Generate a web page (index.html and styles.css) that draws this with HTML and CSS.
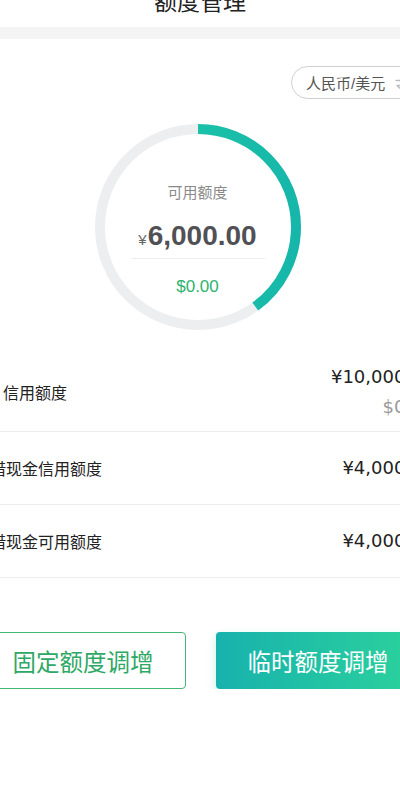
FILE: index.html
```html
<!DOCTYPE html>
<html lang="zh-CN">
<head>
    <meta charset="UTF-8">
    <meta name="viewport" content="width=device-width, initial-scale=1.0">
    <title>额度管理</title>
    <link rel="stylesheet" href="styles.css">
</head>
<body>
    <div class="page">
        <div class="header">
            <h1>额度管理</h1>
        </div>
        <div class="band"></div>

        <div class="summary">
            <div class="switch-row">
                <div class="currency-switch">
                    <span>人民币/美元</span>
                    <svg class="swap-icon" width="14" height="14" viewBox="0 0 14 14">
                        <path d="M2 4.5h9M8.5 2l2.5 2.5M12 9.5H3M5.5 12L3 9.5" fill="none" stroke="#bbb" stroke-width="1.3" stroke-linecap="round"/>
                    </svg>
                </div>
            </div>

            <div class="ring">
                <svg class="ring-chart" width="206" height="206" viewBox="0 0 206 206">
                    <defs>
                        <linearGradient id="arcColor" x1="0" y1="0" x2="0" y2="1">
                            <stop offset="0" stop-color="#1fcaa6"/>
                            <stop offset="1" stop-color="#16b7aa"/>
                        </linearGradient>
                    </defs>
                    <circle cx="103" cy="103" r="98" fill="none" stroke="#edeef0" stroke-width="10"/>
                    <!-- used 4,000 of 10,000 -->
                    <circle cx="103" cy="103" r="98" fill="none" stroke="url(#arcColor)" stroke-width="10"
                            stroke-dasharray="246.3 615.8" transform="rotate(-90 103 103)"/>
                </svg>
                <div class="ring-text">
                    <p class="ring-label">可用额度</p>
                    <p class="ring-amount"><span class="yen">¥</span>6,000.00</p>
                    <div class="ring-line"></div>
                    <p class="ring-usd">$0.00</p>
                </div>
            </div>
        </div>

        <div class="limit-list">
            <div class="limit-row first">
                <span class="row-label main">信用额度</span>
                <div class="row-values">
                    <span class="value">¥10,000.00</span>
                    <span class="value sub">$0.00</span>
                </div>
            </div>
            <div class="limit-row">
                <span class="row-label">预借现金信用额度</span>
                <span class="value">¥4,000.00</span>
            </div>
            <div class="limit-row">
                <span class="row-label">预借现金可用额度</span>
                <span class="value">¥4,000.00</span>
            </div>
        </div>

        <div class="actions">
            <button class="btn btn-outline">固定额度调增</button>
            <button class="btn btn-fill">临时额度调增</button>
        </div>
    </div>
</body>
</html>
```

FILE: styles.css
```css
html, body {
    overflow: hidden;
}
body {
    margin: 0;
    background: #fff;
    font-family: "Liberation Sans", "Noto Sans CJK SC", sans-serif;
    color: #222;
}
p {
    margin: 0;
}
.page {
    width: 480px;
    margin: -23px 0 0 -40px;
}
.header {
    height: 50px;
    text-align: center;
}
.header h1 {
    margin: 0;
    font-size: 23px;
    line-height: 50px;
    font-weight: normal;
    color: #222;
}
.band {
    height: 12px;
    background-color: #f4f4f5;
}
.summary {
    padding: 27px 19px 0 14px;
}
.switch-row {
    display: flex;
    justify-content: flex-end;
}
.currency-switch {
    display: flex;
    align-items: center;
    gap: 9px;
    box-sizing: border-box;
    width: 130px;
    height: 33px;
    padding-left: 14px;
    border: 1px solid #cfcfcf;
    border-radius: 17px;
    font-size: 15px;
    color: #555;
}
.ring {
    display: grid;
    width: 206px;
    height: 206px;
    margin: 25px auto 0;
}
.ring-chart, .ring-text {
    grid-area: 1 / 1;
}
.ring-text {
    display: flex;
    flex-direction: column;
    align-items: center;
    padding-top: 59px;
}
.ring-label {
    font-size: 15px;
    line-height: 20px;
    color: #8a8a8a;
}
.ring-amount {
    margin-top: 15px;
    font-size: 28px;
    line-height: 36px;
    font-weight: bold;
    color: #505055;
}
.ring-amount .yen {
    font-size: 15px;
    font-weight: normal;
    color: #666;
    margin-right: 1px;
}
.ring-line {
    width: 134px;
    height: 1px;
    background-color: #eeeeee;
}
.ring-usd {
    margin-top: 17px;
    font-size: 17px;
    line-height: 22px;
    color: #2db36e;
}
.limit-list {
    margin-top: 22px;
}
.limit-row {
    display: flex;
    justify-content: space-between;
    align-items: center;
    box-sizing: border-box;
    height: 73px;
    padding: 0 6px 0 14px;
    border-bottom: 1px solid #ececec;
}
.limit-row.first {
    height: 80px;
}
.row-label {
    font-size: 16px;
    color: #222;
}
.row-label.main {
    padding-left: 29px;
}
.row-values {
    display: flex;
    flex-direction: column;
    align-items: flex-end;
}
.value {
    font-family: "DejaVu Sans", sans-serif;
    font-size: 18px;
    line-height: 30px;
    color: #222;
}
.value.sub {
    color: #9a9a9a;
}
.actions {
    display: flex;
    gap: 30px;
    margin-top: 54px;
    padding: 0 20px;
}
.btn {
    flex: 1;
    height: 57px;
    border-radius: 4px;
    font-family: "Noto Sans CJK SC", sans-serif;
    font-size: 23.5px;
    cursor: pointer;
}
.btn-outline {
    background: #fff;
    border: 1px solid #45b574;
    color: #2ea866;
}
.btn-fill {
    border: none;
    color: #fff;
    background: linear-gradient(90deg, #17b2ad, #2cd29c);
    box-shadow: 0 4px 10px rgba(30, 190, 160, 0.25);
}
```
